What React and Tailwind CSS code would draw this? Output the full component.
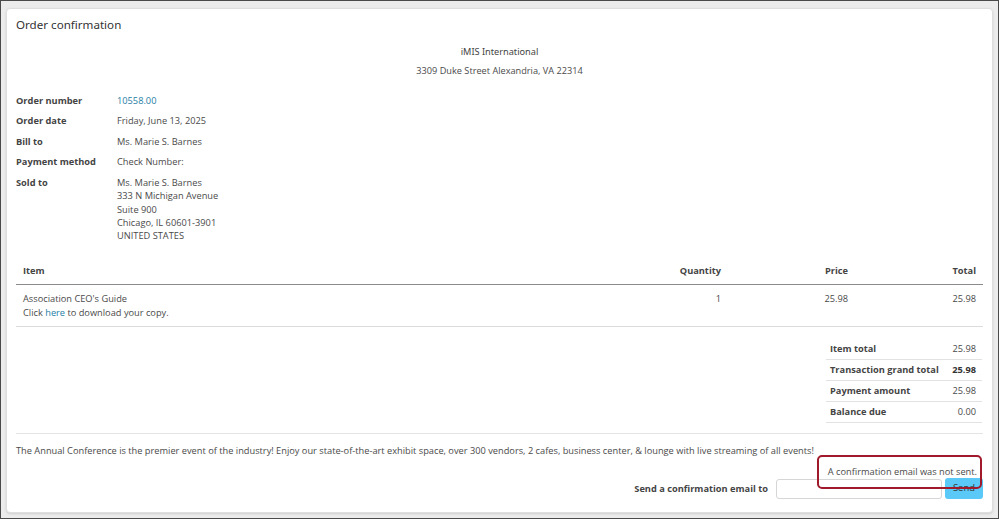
import React from 'react';

const info = [
  { label: 'Order number', lines: ['10558.00'], link: true },
  { label: 'Order date', lines: ['Friday, June 13, 2025'] },
  { label: 'Bill to', lines: ['Ms. Marie S. Barnes'] },
  { label: 'Payment method', lines: ['Check Number:'] },
  {
    label: 'Sold to',
    lines: ['Ms. Marie S. Barnes', '333 N Michigan Avenue', 'Suite 900', 'Chicago, IL 60601-3901', 'UNITED STATES'],
  },
];

const totals = [
  { label: 'Item total', value: '25.98' },
  { label: 'Transaction grand total', value: '25.98', strong: true },
  { label: 'Payment amount', value: '25.98' },
  { label: 'Balance due', value: '0.00' },
];

export default function App() {
  return (
    <div
      className="relative w-[999px] h-[519px] overflow-hidden border border-[#4a4a4a] bg-[#ececec] text-[#4a4a4a] text-[9.25px]"
      style={{ fontFamily: '"Open Sans", "Noto Sans", sans-serif' }}
    >
      <div className="mt-[7px] ml-[5px] w-[987px] h-[505px] bg-white border border-[#dedede] rounded-[4px] shadow-sm px-[9px] pt-[6px]">
        <h1 className="text-[11.6px] leading-[20px] text-[#333] font-['Noto_Sans',sans-serif]">Order confirmation</h1>

        <div className="mt-[7px] text-center text-[9.2px] leading-[19px] text-[#444]">
          <div className="font-['Noto_Sans',sans-serif]">iMIS International</div>
          <div className="text-[#4a4a4a]">3309 Duke Street Alexandria, VA 22314</div>
        </div>

        <div className="mt-[14px] flex flex-col gap-[7.2px]">
          {info.map((row) => (
            <div key={row.label} className="flex leading-[13.3px]">
              <div className="w-[101px] font-bold text-[#444]">{row.label}</div>
              <div>
                {row.lines.map((l) => (
                  <div key={l} className={row.link ? 'text-[#1f7ea6]' : ''}>
                    {l}
                  </div>
                ))}
              </div>
            </div>
          ))}
        </div>

        <div className="mt-[15px] w-[967px]">
          <div className="flex items-center h-[28px] border-b-[1.5px] border-[#8a8a8a] font-bold text-[#444]">
            <div className="flex-1 pl-[7px]">Item</div>
            <div className="w-[80px] text-right">Quantity</div>
            <div className="w-[127px] text-right">Price</div>
            <div className="w-[135px] text-right pr-[7px]">Total</div>
          </div>
          <div className="flex pt-[7px] pb-[7px] leading-[13.3px] border-b border-[#dcdcdc]">
            <div className="flex-1 pl-[7px]">
              <div>Association CEO's Guide</div>
              <div>
                Click <span className="text-[#1f7ea6]">here</span> to download your copy.
              </div>
            </div>
            <div className="w-[80px] text-right">1</div>
            <div className="w-[127px] text-right">25.98</div>
            <div className="w-[135px] text-right pr-[7px]">25.98</div>
          </div>

          <div className="mt-[12px] ml-auto w-[156px] mr-[1px]">
            {totals.map((t) => (
              <div key={t.label} className="flex items-center justify-between h-[21px] pl-[4px] pr-[6px] border-b border-[#e2e2e2]">
                <span className="font-bold text-[#444]">{t.label}</span>
                <span className={t.strong ? 'font-bold text-[#333]' : ''}>{t.value}</span>
              </div>
            ))}
          </div>

          <div className="mt-[10px] border-t border-[#e4e4e4]" />
          <p className="mt-[10px] leading-[13px]">
            The Annual Conference is the premier event of the industry! Enjoy our state-of-the-art exhibit space, over 300 vendors, 2 cafes, business center, &amp; lounge with live streaming of all events!
          </p>
          <p className="mt-[8px] leading-[13px] text-right pr-[6px]">A confirmation email was not sent.</p>
          <div className="mt-0 flex items-center justify-end">
            <span className="font-bold text-[#444] mr-[8px]">Send a confirmation email to</span>
            <input className="w-[166px] h-[20px] border border-[#d6d6d6] rounded-[3px] bg-white" />
            <button className="ml-[3px] w-[38px] h-[21px] rounded-[3px] bg-[#5bc9f7] text-[#333] text-[9.5px]">Send</button>
          </div>
        </div>
      </div>

      <div className="absolute left-[816px] top-[454px] w-[165px] h-[34px] border-2 border-[#a01a2c] rounded-[5px]" />
    </div>
  );
}
